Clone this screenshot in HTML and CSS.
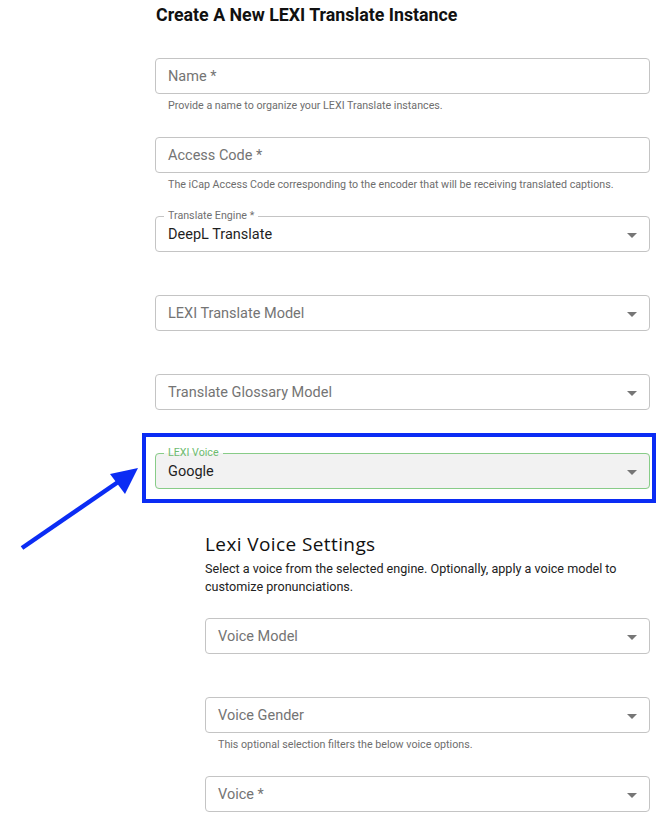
FILE: index.html
```html
<!DOCTYPE html>
<html lang="en">
<head>
    <meta charset="UTF-8">
    <meta name="viewport" content="width=device-width, initial-scale=1.0">
    <title>Create LEXI Translate Instance</title>
    <link rel="stylesheet" href="styles.css">
</head>
<body>
    <div class="page">
        <h1>Create A New LEXI Translate Instance</h1>

        <div class="form-row">
            <div class="field">
                <span class="placeholder">Name *</span>
                <fieldset></fieldset>
            </div>
            <p class="helper">Provide a name to organize your LEXI Translate instances.</p>
        </div>

        <div class="form-row">
            <div class="field">
                <span class="placeholder">Access Code *</span>
                <fieldset></fieldset>
            </div>
            <p class="helper">The iCap Access Code corresponding to the encoder that will be receiving translated captions.</p>
        </div>

        <div class="form-row">
            <div class="field select">
                <span class="value">DeepL Translate</span>
                <span class="caret"></span>
                <fieldset class="notched"><legend>Translate Engine *</legend></fieldset>
            </div>
        </div>

        <div class="form-row">
            <div class="field select">
                <span class="placeholder">LEXI Translate Model</span>
                <span class="caret"></span>
                <fieldset></fieldset>
            </div>
        </div>

        <div class="form-row">
            <div class="field select">
                <span class="placeholder">Translate Glossary Model</span>
                <span class="caret"></span>
                <fieldset></fieldset>
            </div>
        </div>

        <div class="form-row highlighted">
            <div class="field select focused">
                <span class="value">Google</span>
                <span class="caret"></span>
                <fieldset class="notched"><legend>LEXI Voice</legend></fieldset>
            </div>
            <div class="highlight-box"></div>
        </div>

        <div class="voice-settings">
            <h2>Lexi Voice Settings</h2>
            <p class="description">Select a voice from the selected engine. Optionally, apply a voice model to customize pronunciations.</p>

            <div class="form-row">
                <div class="field select">
                    <span class="placeholder">Voice Model</span>
                    <span class="caret"></span>
                    <fieldset></fieldset>
                </div>
            </div>

            <div class="form-row">
                <div class="field select">
                    <span class="placeholder">Voice Gender</span>
                    <span class="caret"></span>
                    <fieldset></fieldset>
                </div>
                <p class="helper">This optional selection filters the below voice options.</p>
            </div>

            <div class="form-row">
                <div class="field select">
                    <span class="placeholder">Voice *</span>
                    <span class="caret"></span>
                    <fieldset></fieldset>
                </div>
            </div>
        </div>

        <svg class="arrow" width="140" height="125" viewBox="10 435 140 125">
            <line x1="22" y1="548" x2="121" y2="480" stroke="#0b2cf4" stroke-width="4.5"/>
            <polygon points="138,468 110,474 125,494" fill="#0b2cf4"/>
        </svg>
    </div>
</body>
</html>
```

FILE: styles.css
```css
body {
    margin: 0;
    background: #fff;
    font-family: Roboto, "Liberation Sans", Arial, sans-serif;
}
.page {
    position: relative;
    width: 495px;
    padding-left: 155px;
}
h1 {
    margin: 0 0 28px 1px;
    font-size: 17.8px;
    line-height: 30px;
    font-weight: 700;
    color: #111;
}
.form-row {
    position: relative;
    min-height: 79px;
}
.field {
    position: relative;
    height: 36px;
    display: flex;
    align-items: center;
    padding: 0 13px;
    font-size: 14.5px;
    border-radius: 4px;
}
.field fieldset {
    position: absolute;
    top: 0;
    left: 0;
    right: 0;
    bottom: 0;
    margin: 0;
    padding: 0 8px;
    border: 1px solid #c4c4c4;
    border-radius: 4px;
    pointer-events: none;
}
.field fieldset.notched {
    top: -6px;
}
.field legend {
    padding: 0 4px;
    font-size: 10.7px;
    line-height: 12px;
    color: #707070;
}
.placeholder {
    color: #747474;
}
.value {
    color: #1f1f1f;
}
.caret {
    margin-left: auto;
    margin-top: 2px;
    border-left: 5px solid transparent;
    border-right: 5px solid transparent;
    border-top: 5px solid #767676;
}
.field.focused {
    background: #f2f2f2;
}
.field.focused fieldset {
    border-color: #88cc88;
}
.field.focused legend {
    color: #6dbb6f;
}
.helper {
    margin: 5px 13px 0;
    font-size: 10.7px;
    line-height: 14px;
    color: #6e6e6e;
}
.highlight-box {
    position: absolute;
    left: -13px;
    right: -6px;
    top: -20px;
    height: 70px;
    border: 4px solid #0b2cf4;
    box-sizing: border-box;
    pointer-events: none;
}
.voice-settings {
    margin-left: 50px;
}
h2 {
    margin: 0;
    font-family: "Open Sans", sans-serif;
    font-size: 19px;
    line-height: 24px;
    font-weight: 500;
    letter-spacing: 0.4px;
    color: #111;
}
.description {
    margin: 4px 0 22px;
    font-size: 12.6px;
    line-height: 18px;
    color: #222;
}
.arrow {
    position: absolute;
    left: 10px;
    top: 435px;
}
```
